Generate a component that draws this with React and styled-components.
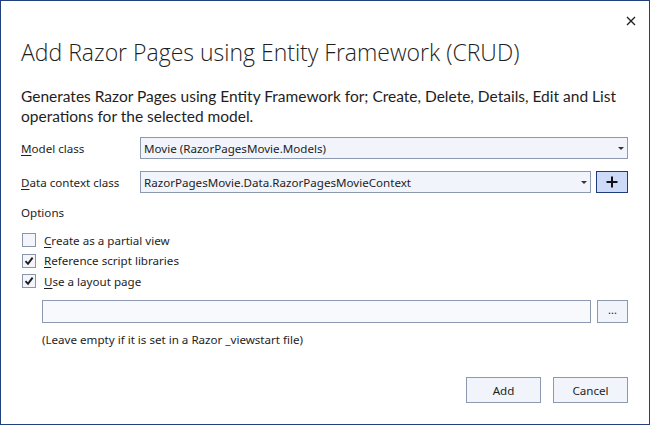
import styled, { createGlobalStyle } from "styled-components";

const GlobalStyle = createGlobalStyle`
  html, body {
    margin: 0;
    padding: 0;
    background: #ffffff;
  }
  body {
    font-family: "Noto Sans", "Open Sans", sans-serif;
    color: #1e1e1e;
  }
`;

// Dialog frame
const Dialog = styled.div`
  width: 650px;
  height: 425px;
  box-sizing: border-box;
  border: 1px solid #22407c;
  background: #ffffff;
  display: flex;
  flex-direction: column;
  padding: 0 21px 0 20px;
`;

const TitleBar = styled.div`
  display: flex;
  justify-content: flex-end;
  height: 36px;
  padding-top: 11px;
  box-sizing: border-box;
  margin-right: -13px;
`;

const CloseButton = styled.button`
  width: 20px;
  height: 18px;
  border: none;
  background: transparent;
  padding: 0;
  display: flex;
  align-items: center;
  justify-content: center;
`;

const Title = styled.h1`
  margin: 0;
  font-family: "Open Sans", sans-serif;
  font-weight: 300;
  font-size: 23px;
  line-height: 30px;
  color: #1e1e1e;
`;

const Description = styled.p`
  margin: 19px 0 0;
  font-family: "Lato", sans-serif;
  font-size: 15.5px;
  line-height: 20px;
  color: #1e1e1e;
`;

const Form = styled.div`
  display: grid;
  grid-template-columns: 119px 1fr;
  grid-auto-rows: 22px;
  row-gap: 12px;
  align-items: center;
  margin-top: 11px;
`;

const Label = styled.span`
  font-size: 11.6px;
  color: #1e1e1e;
`;

const Key = styled.span`
  text-decoration: underline;
  text-underline-offset: 2px;
`;

const FieldRow = styled.div`
  display: flex;
  gap: 5px;
  height: 22px;
`;

const Select = styled.div`
  flex: 1;
  height: 22px;
  box-sizing: border-box;
  border: 1px solid #8d99ae;
  background: #f1f4fb;
  display: flex;
  align-items: center;
  padding-left: 3px;
  font-size: 11.6px;
  color: #1e1e1e;
`;

const SelectText = styled.span`
  flex: 1;
`;

const Arrow = styled.span`
  width: 12px;
  display: flex;
  justify-content: center;
  &::after {
    content: "";
    border-left: 3px solid transparent;
    border-right: 3px solid transparent;
    border-top: 3px solid #333;
  }
`;

const AddButton = styled.button`
  width: 32px;
  height: 22px;
  box-sizing: border-box;
  border: 1px solid #1f3d7a;
  background: #cddbf8;
  padding: 0;
  display: flex;
  align-items: center;
  justify-content: center;
`;

const SectionLabel = styled.div`
  font-size: 11.6px;
  margin-top: 12px;
`;

const Checks = styled.div`
  display: flex;
  flex-direction: column;
  gap: 6.5px;
  margin-top: 13px;
  padding-left: 1px;
`;

const CheckRow = styled.label`
  display: flex;
  align-items: center;
  gap: 8px;
  height: 14px;
  font-size: 11.6px;
`;

const Box = styled.span`
  width: 14px;
  height: 14px;
  box-sizing: border-box;
  border: 1px solid #8b95a9;
  background: #f3f5fb;
  display: flex;
  align-items: center;
  justify-content: center;
`;

const LayoutRow = styled.div`
  display: flex;
  gap: 6px;
  margin-top: 12px;
  padding-left: 21px;
`;

const TextInput = styled.div`
  flex: 1;
  height: 23px;
  box-sizing: border-box;
  border: 1px solid #8d99ae;
  background: #f8f9fc;
`;

const BrowseButton = styled.button`
  width: 31px;
  height: 23px;
  box-sizing: border-box;
  border: 1px solid #8d99ae;
  background: #f1f4fb;
  font-family: "Noto Sans", sans-serif;
  font-size: 11px;
  color: #1e1e1e;
  padding: 0 0 4px;
`;

const Hint = styled.div`
  font-size: 11.6px;
  margin-top: 9px;
  padding-left: 21px;
`;

const Footer = styled.div`
  display: flex;
  justify-content: flex-end;
  gap: 12px;
  margin-top: auto;
  margin-bottom: 21px;
`;

const Button = styled.button`
  width: 75px;
  height: 26px;
  box-sizing: border-box;
  border: 1px solid #8d99ae;
  background: #f1f4fb;
  font-family: "Noto Sans", sans-serif;
  font-size: 11.6px;
  color: #1e1e1e;
`;

const Check = () => (
  <svg width="10" height="10" viewBox="0 0 10 10">
    <path d="M1.5 5.2 L4 7.8 L8.6 1.6" fill="none" stroke="#1e1e1e" strokeWidth="1.9" />
  </svg>
);

const options = [
  { key: "C", rest: "reate as a partial view", checked: false },
  { key: "R", rest: "eference script libraries", checked: true },
  { key: "U", rest: "se a layout page", checked: true },
];

export default function App() {
  return (
    <>
      <GlobalStyle />
      <Dialog>
        <TitleBar>
          <CloseButton aria-label="Close">
            <svg width="10" height="10" viewBox="0 0 10 10">
              <path d="M1 1 L9 9 M9 1 L1 9" stroke="#1e1e1e" strokeWidth="1.3" />
            </svg>
          </CloseButton>
        </TitleBar>
        <Title>Add Razor Pages using Entity Framework (CRUD)</Title>
        <Description>
          Generates Razor Pages using Entity Framework for; Create, Delete, Details, Edit and List
          <br />
          operations for the selected model.
        </Description>
        <Form>
          <Label>
            <Key>M</Key>odel class
          </Label>
          <FieldRow>
            <Select>
              <SelectText>Movie (RazorPagesMovie.Models)</SelectText>
              <Arrow />
            </Select>
          </FieldRow>
          <Label>
            <Key>D</Key>ata context class
          </Label>
          <FieldRow>
            <Select>
              <SelectText>RazorPagesMovie.Data.RazorPagesMovieContext</SelectText>
              <Arrow />
            </Select>
            <AddButton aria-label="Add data context">
              <svg width="12" height="12" viewBox="0 0 12 12">
                <path d="M6 0.5 V11.5 M0.5 6 H11.5" stroke="#111" strokeWidth="2" />
              </svg>
            </AddButton>
          </FieldRow>
        </Form>
        <SectionLabel>Options</SectionLabel>
        <Checks>
          {options.map((o) => (
            <CheckRow key={o.key}>
              <Box>{o.checked && <Check />}</Box>
              <span>
                <Key>{o.key}</Key>
                {o.rest}
              </span>
            </CheckRow>
          ))}
        </Checks>
        <LayoutRow>
          <TextInput />
          <BrowseButton>...</BrowseButton>
        </LayoutRow>
        <Hint>(Leave empty if it is set in a Razor _viewstart file)</Hint>
        <Footer>
          <Button>Add</Button>
          <Button>Cancel</Button>
        </Footer>
      </Dialog>
    </>
  );
}
